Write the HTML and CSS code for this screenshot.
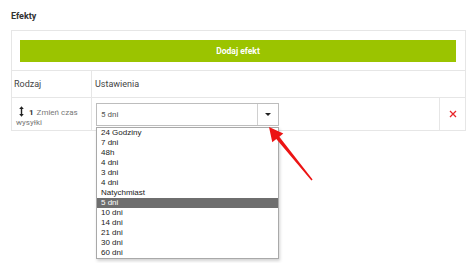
FILE: index.html
```html
<!DOCTYPE html>
<html lang="pl">
<head>
    <meta charset="UTF-8">
    <meta name="viewport" content="width=device-width, initial-scale=1.0">
    <title>Efekty</title>
    <link rel="stylesheet" href="styles.css">
</head>
<body>
    <h2 class="title">Efekty</h2>
    <div class="panel">
        <div class="add-row">
            <button type="button" class="add-btn">Dodaj efekt</button>
        </div>
        <div class="head-row">
            <div class="cell">Rodzaj</div>
            <div class="cell sep">Ustawienia</div>
        </div>
        <div class="data-row">
            <div class="cell kind">
                <div class="kind-line">
                    <svg class="drag" width="5" height="11" viewBox="0 0 5 11">
                        <path d="M2.5 0.3 L0.2 3 H4.8 Z M2.5 10.7 L0.2 8 H4.8 Z" fill="#222"/>
                        <rect x="1.8" y="2.5" width="1.4" height="6" fill="#222"/>
                    </svg><b class="num">1</b><span>Zmień czas</span>
                </div>
                <div>wysyłki</div>
            </div>
            <div class="cell sep settings">
                <div class="select">
                    <span class="select-value">5 dni</span>
                    <span class="select-btn"><i class="caret"></i></span>
                    <ul class="options">
                        <li>24 Godziny</li>
                        <li>7 dni</li>
                        <li>48h</li>
                        <li>4 dni</li>
                        <li>3 dni</li>
                        <li>4 dni</li>
                        <li>Natychmiast</li>
                        <li class="active">5 dni</li>
                        <li>10 dni</li>
                        <li>14 dni</li>
                        <li>21 dni</li>
                        <li>30 dni</li>
                        <li>60 dni</li>
                    </ul>
                </div>
            </div>
            <div class="cell sep remove">
                <svg width="8" height="8" viewBox="0 0 8 8">
                    <path d="M1 1 L7 7 M7 1 L1 7" stroke="#e8262a" stroke-width="1.3"/>
                </svg>
            </div>
        </div>
    </div>

    <!-- annotation arrow -->
    <svg class="pointer" width="474" height="263" viewBox="0 0 474 263">
        <polygon points="269,127 283.3,133.5 279.3,136.8 312.6,179.6 311.4,180.4 276.3,139 272.3,142.3" fill="#ec1414"/>
    </svg>
</body>
</html>
```

FILE: styles.css
```css
body {
    margin: 0;
    font-family: Roboto, "Liberation Sans", Arial, sans-serif;
    color: #444;
    position: relative;
    width: 474px;
    height: 263px;
    overflow: hidden;
}
.title {
    margin: 0;
    padding: 10px 0 0 11px;
    height: 20px;
    font-size: 9px;
    line-height: 12px;
    font-weight: bold;
    color: #333;
}
.panel {
    margin-left: 11px;
    width: 455px;
    box-sizing: border-box;
    border: 1px solid #e6e6e6;
}
.add-row {
    padding: 9px 9px 8px 8px;
    border-bottom: 1px solid #e6e6e6;
}
.add-btn {
    display: block;
    width: 100%;
    height: 22px;
    border: none;
    background-color: #9bc400;
    color: #fff;
    font-family: Roboto, sans-serif;
    font-size: 8.5px;
    font-weight: bold;
    padding: 0;
}
.head-row {
    display: grid;
    grid-template-columns: 79px 1fr;
    height: 27px;
    box-sizing: border-box;
    border-bottom: 1px solid #e6e6e6;
    font-size: 9px;
}
.head-row .cell {
    display: flex;
    align-items: center;
    padding-left: 2px;
}
.head-row .sep {
    padding-left: 3px;
}
.sep {
    border-left: 1px solid #e6e6e6;
}
.data-row {
    display: grid;
    grid-template-columns: 79px 1fr 26px;
    height: 32px;
}
.kind {
    padding: 8px 0 0 4px;
    font-size: 8px;
    line-height: 10px;
    color: #777;
}
.kind-line {
    white-space: nowrap;
}
.drag {
    margin-left: 3px;
    margin-right: 5px;
    vertical-align: -2px;
}
.num {
    color: #333;
    margin-right: 3px;
}
.settings {
    padding: 5px 0 0 4px;
}
.select {
    position: relative;
    width: 183px;
    height: 23px;
    box-sizing: border-box;
    border: 1px solid #bdbdbd;
    display: flex;
    font-size: 8px;
    color: #555;
}
.select-value {
    flex: 1;
    display: flex;
    align-items: center;
    padding-left: 4px;
}
.select-btn {
    width: 20px;
    border-left: 1px solid #d0d0d0;
    display: flex;
    align-items: center;
    justify-content: center;
}
.caret {
    width: 0;
    height: 0;
    border-left: 3px solid transparent;
    border-right: 3px solid transparent;
    border-top: 3px solid #222;
}
.options {
    position: absolute;
    left: -1px;
    top: 23px;
    width: 183px;
    box-sizing: border-box;
    margin: 0;
    padding: 0;
    list-style: none;
    background: #fff;
    border: 1px solid #a9a9a9;
    box-shadow: 1px 2px 3px rgba(0, 0, 0, 0.18);
    font-family: "Liberation Sans", Arial, sans-serif;
    font-size: 8px;
    line-height: 10px;
    color: #222;
}
.options li {
    padding-left: 4px;
    height: 10px;
}
.options .active {
    background-color: #6e6e6e;
    color: #fff;
}
.remove {
    display: flex;
    align-items: center;
    justify-content: center;
    padding-bottom: 1px;
}
.pointer {
    position: absolute;
    left: 0;
    top: 0;
    pointer-events: none;
}
```
